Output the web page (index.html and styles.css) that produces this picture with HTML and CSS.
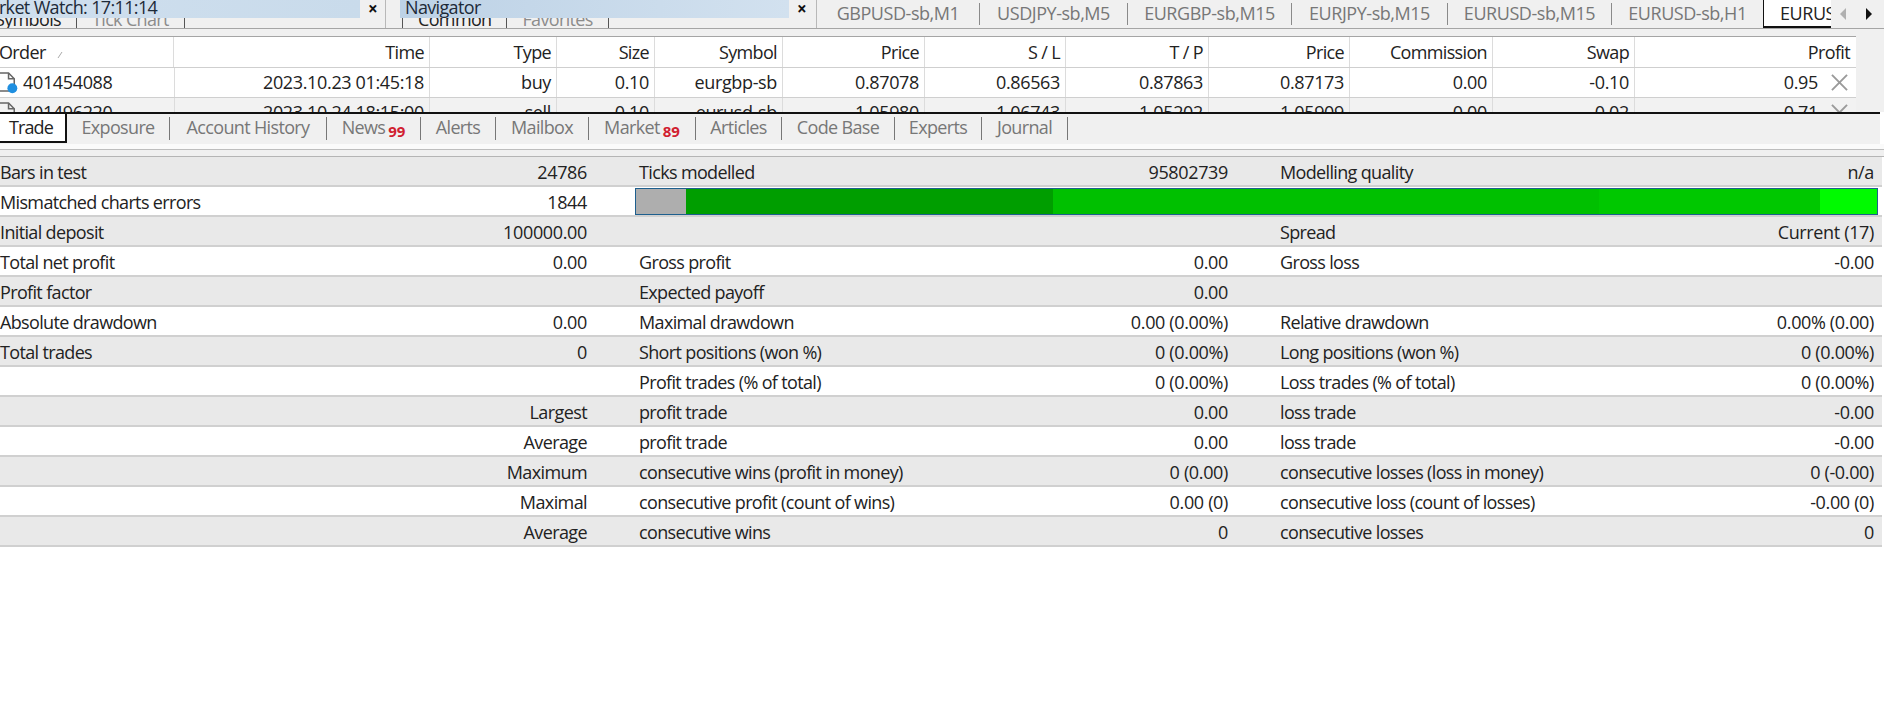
FILE: index.html
```html
<!DOCTYPE html>
<html lang="en">
<head>
<meta charset="utf-8">
<title>Strategy Tester Report</title>
<link rel="stylesheet" href="styles.css">
</head>
<body>
<header class="topbar">
  <section class="panel panel-mw">
    <div class="titlebar">
      <div class="title title-mw"><span class="title-text shift-mw">Market Watch: 17:11:14</span></div>
      <span class="close">×</span>
    </div>
    <div class="subtabs subtabs-mw">
      <span class="subtab active">Symbols</span>
      <span class="subtab">Tick Chart</span>
    </div>
  </section>
  <section class="panel panel-nav">
    <div class="titlebar">
      <div class="title title-nav"><span class="title-text">Navigator</span></div>
      <span class="close">×</span>
    </div>
    <div class="subtabs subtabs-nav">
      <span class="subtab active">Common</span>
      <span class="subtab">Favorites</span>
    </div>
  </section>
  <nav class="charttabs">
    <span class="ctab">GBPUSD-sb,M1</span>
    <span class="ctab">USDJPY-sb,M5</span>
    <span class="ctab">EURGBP-sb,M15</span>
    <span class="ctab">EURJPY-sb,M15</span>
    <span class="ctab">EURUSD-sb,M15</span>
    <span class="ctab">EURUSD-sb,H1</span>
    <span class="ctab ctab-active"><span class="ctab-clip">EURUSD-sb,H4</span></span>
    <span class="arrows">
      <svg class="arrow" viewBox="0 0 8 12"><path class="arrow-off" d="M7 0 V12 L1 6 Z"/></svg>
      <svg class="arrow" viewBox="0 0 8 12"><path class="arrow-on" d="M1 0 V12 L7 6 Z"/></svg>
    </span>
  </nav>
</header>

<main class="orders">
  <div class="orders-inner">
    <div class="orow ohead">
      <span class="c cl c-order">Order<svg class="sort" viewBox="0 0 6 8"><path d="M1 7 L5 1" /></svg></span>
      <span class="c">Time</span><span class="c">Type</span><span class="c">Size</span><span class="c">Symbol</span>
      <span class="c">Price</span><span class="c">S / L</span><span class="c">T / P</span><span class="c">Price</span>
      <span class="c">Commission</span><span class="c">Swap</span><span class="c">Profit</span>
    </div>
    <div class="orow odata">
      <span class="c cl c-id"><svg class="ficon" viewBox="0 0 20 24"><path class="fdoc" d="M-2 2 H9 L15 8 V21 H-2"/><path class="fdoc" d="M9 2 V8 H15"/><circle class="fdot" cx="13" cy="18" r="5.2"/></svg>401454088</span>
      <span class="c">2023.10.23 01:45:18</span><span class="c">buy</span><span class="c">0.10</span><span class="c">eurgbp-sb</span>
      <span class="c">0.87078</span><span class="c">0.86563</span><span class="c">0.87863</span><span class="c">0.87173</span>
      <span class="c">0.00</span><span class="c">-0.10</span>
      <span class="c c-profit">0.95<svg class="xicon" viewBox="0 0 18 18"><path d="M1 1 L17 17 M17 1 L1 17"/></svg></span>
    </div>
    <div class="orow odata oalt">
      <span class="c cl c-id"><svg class="ficon" viewBox="0 0 20 24"><path class="fdoc" d="M-2 2 H9 L15 8 V21 H-2"/><path class="fdoc" d="M9 2 V8 H15"/></svg>401496220</span>
      <span class="c">2023.10.24 18:15:00</span><span class="c">sell</span><span class="c">0.10</span><span class="c">eurusd-sb</span>
      <span class="c">1.05980</span><span class="c">1.06743</span><span class="c">1.05202</span><span class="c">1.05909</span>
      <span class="c">0.00</span><span class="c">-0.02</span>
      <span class="c c-profit">0.71<svg class="xicon" viewBox="0 0 18 18"><path d="M1 1 L17 17 M17 1 L1 17"/></svg></span>
    </div>
  </div>
</main>

<nav class="tabs">
  <span class="tab tab-active">Trade</span>
  <span class="tab">Exposure</span>
  <span class="tab">Account History</span>
  <span class="tab">News<b class="badge">99</b></span>
  <span class="tab">Alerts</span>
  <span class="tab">Mailbox</span>
  <span class="tab">Market<b class="badge">89</b></span>
  <span class="tab">Articles</span>
  <span class="tab">Code Base</span>
  <span class="tab">Experts</span>
  <span class="tab">Journal</span>
</nav>
<div class="strip"></div>

<section class="report">
  <div class="row"><span>Bars in test</span><span class="v">24786</span><span class="m">Ticks modelled</span><span class="v">95802739</span><span class="m">Modelling quality</span><span class="v">n/a</span></div>
  <div class="row"><span>Mismatched charts errors</span><span class="v">1844</span>
    <div class="quality"><i class="q q1"></i><i class="q q2"></i><i class="q q3"></i><i class="q q4"></i><i class="q q5"></i></div>
  </div>
  <div class="row"><span>Initial deposit</span><span class="v">100000.00</span><span class="m"></span><span class="v"></span><span class="m">Spread</span><span class="v">Current (17)</span></div>
  <div class="row"><span>Total net profit</span><span class="v">0.00</span><span class="m">Gross profit</span><span class="v">0.00</span><span class="m">Gross loss</span><span class="v">-0.00</span></div>
  <div class="row"><span>Profit factor</span><span class="v"></span><span class="m">Expected payoff</span><span class="v">0.00</span><span class="m"></span><span class="v"></span></div>
  <div class="row"><span>Absolute drawdown</span><span class="v">0.00</span><span class="m">Maximal drawdown</span><span class="v">0.00 (0.00%)</span><span class="m">Relative drawdown</span><span class="v">0.00% (0.00)</span></div>
  <div class="row"><span>Total trades</span><span class="v">0</span><span class="m">Short positions (won %)</span><span class="v">0 (0.00%)</span><span class="m">Long positions (won %)</span><span class="v">0 (0.00%)</span></div>
  <div class="row"><span></span><span class="v"></span><span class="m">Profit trades (% of total)</span><span class="v">0 (0.00%)</span><span class="m">Loss trades (% of total)</span><span class="v">0 (0.00%)</span></div>
  <div class="row"><span></span><span class="v w">Largest</span><span class="m">profit trade</span><span class="v">0.00</span><span class="m">loss trade</span><span class="v">-0.00</span></div>
  <div class="row"><span></span><span class="v w">Average</span><span class="m">profit trade</span><span class="v">0.00</span><span class="m">loss trade</span><span class="v">-0.00</span></div>
  <div class="row"><span></span><span class="v w">Maximum</span><span class="m">consecutive wins (profit in money)</span><span class="v">0 (0.00)</span><span class="m">consecutive losses (loss in money)</span><span class="v">0 (-0.00)</span></div>
  <div class="row"><span></span><span class="v w">Maximal</span><span class="m">consecutive profit (count of wins)</span><span class="v">0.00 (0)</span><span class="m">consecutive loss (count of losses)</span><span class="v">-0.00 (0)</span></div>
  <div class="row"><span></span><span class="v w">Average</span><span class="m">consecutive wins</span><span class="v">0</span><span class="m">consecutive losses</span><span class="v">0</span></div>
</section>
</body>
</html>
```
FILE: styles.css
```css
* { box-sizing: border-box; }
html, body { margin: 0; padding: 0; background: #fff; }
body {
  width: 1884px;
  height: 719px;
  overflow: hidden;
  font-family: "Open Sans", "Noto Sans", "Liberation Sans", sans-serif;
  font-size: 18px;
  letter-spacing: -0.65px;
  color: #222;
}

/* top strip */
.topbar {
  display: grid;
  grid-template-columns: 386px 431px 1fr;
  height: 29px;
  background: #f0f0f0;
  border-bottom: 1px solid #a5a5a5;
  overflow: hidden;
}
.panel { border-right: 1px solid #b8b8b8; overflow: hidden; }
.titlebar { display: flex; height: 18px; align-items: center; }
.panel-nav .titlebar { padding-left: 14px; }
.title {
  height: 18px;
  line-height: 14px;
  overflow: hidden;
  white-space: nowrap;
  color: #1d2a38;
}
.title-mw { width: 364px; background: linear-gradient(90deg, #cfdfee, #c9dbeb); }
.title-nav { width: 389px; background: linear-gradient(90deg, #bdd2e6, #d2e1ef); padding-left: 5px; }
.title-text { display: block; }
.shift-mw { margin-left: -26px; }
.close { width: 25px; text-align: center; font-weight: 700; font-size: 17px; line-height: 14px; color: #111; }
.subtabs { display: flex; height: 10px; overflow: hidden; color: #8c8c8c; align-items: flex-end; }
.subtabs-nav { margin-left: 16px; }
.subtab {
  display: block;
  height: 10px;
  line-height: 2px;
  padding: 0 15px;
  border-right: 1px solid #555;
  white-space: nowrap;
}
.subtab.active { color: #222; }
.subtabs-mw .subtab.active { margin-left: -20px; }
.subtabs-nav { border-left: 1px solid #555; }

.charttabs {
  display: grid;
  grid-template-columns: 163px 148px 164px 156px 164px 151px 68px 1fr;
  align-items: start;
  height: 28px;
  letter-spacing: -0.45px;
}
.ctab {
  height: 22px;
  margin-top: 3px;
  line-height: 21px;
  text-align: center;
  color: #777;
  border-right: 1px solid #8a8a8a;
  white-space: nowrap;
  overflow: hidden;
}
.ctab:nth-child(6) { border-right: 0; }
.ctab.ctab-active {
  height: 28px;
  margin-top: 0;
  line-height: 27px;
  color: #222;
  background: #fff;
  border-left: 1px solid #111;
  border-bottom: 2px solid #111;
  border-right: 0;
  text-align: left;
  padding-left: 16px;
}
.ctab-clip { display: block; width: 52px; overflow: hidden; }
.arrows { display: flex; align-items: center; gap: 18px; height: 28px; padding-left: 8px; background: #f0f0f0; }
.arrow { width: 8px; height: 12px; }
.arrow-off { fill: #b0b0b0; }
.arrow-on { fill: #111; }

/* orders table */
.orders { height: 83px; padding-top: 7px; background: #f0f0f0; overflow: hidden; }
.orders-inner { width: 1856px; border-top: 1px solid #a5a5a5; background: #fff; }
.orow {
  display: grid;
  grid-template-columns: 175px 255px 127px 98px 128px 142px 141px 143px 141px 143px 142px 221px;
  height: 30px;
  line-height: 29px;
  border-bottom: 1px solid #cfcfcf;
  white-space: nowrap;
}
.ohead { height: 31px; line-height: 31px; }
.odata { letter-spacing: -0.35px; }
.oalt { background: #f2f2f2; }
.c { padding-right: 5px; text-align: right; border-right: 1px solid #dcdcdc; overflow: hidden; }
.c:last-child { border-right: 0; }
.cl { text-align: left; padding: 0; }
.c-order { position: relative; left: -1px; }
.c-id { display: flex; align-items: center; gap: 4px; }
.sort { width: 6px; height: 8px; margin-left: 11px; }
.sort path { stroke: #aaa; stroke-width: 1; fill: none; }
.ficon { width: 19px; height: 23px; flex: none; }
.fdoc { fill: none; stroke: #666; stroke-width: 1.6; }
.fdot { fill: #1f8fe0; }
.c-profit { display: flex; justify-content: flex-end; align-items: center; gap: 13px; padding-right: 8px; }
.ohead .c:last-child { padding-right: 6px; }
.xicon { width: 17px; height: 17px; flex: none; }
.xicon path { stroke: #9a9a9a; stroke-width: 2; fill: none; }

/* bottom tabs */
.tabs {
  display: grid;
  grid-template-columns: 67px 103px 157px 94px 75px 93px 107px 86px 113px 87px 86px 1fr;
  height: 32px;
  width: 1880px;
  background: #f0f0f0;
  border-top: 2px solid #111;
  margin-top: 0;
  align-items: start;
}
.tab {
  height: 23px;
  margin-top: 3px;
  line-height: 20px;
  text-align: center;
  color: #777;
  border-right: 1px solid #777;
  white-space: nowrap;
}
.tab.tab-active {
  height: 29px;
  margin-top: 0;
  line-height: 26px;
  color: #222;
  background: #fff;
  border-right: 2px solid #111;
  border-bottom: 2px solid #111;
  letter-spacing: -0.9px;
  padding-right: 3px;
}
.badge {
  color: #d12030;
  font-size: 15px;
  font-weight: 700;
  letter-spacing: 0;
  margin-left: 3px;
  position: relative;
  top: 3px;
}
.strip {
  height: 13px;
  background: linear-gradient(#fafafa 0 5px, #bdbdbd 5px 6px, #f0f0f0 6px);
  border-bottom: 1px solid #b5b5b5;
}

/* report */
.row {
  display: grid;
  grid-template-columns: 420px 167px 313px 328px 352px 298px;
  width: 1882px;
  height: 30px;
  line-height: 30px;
  border-bottom: 2px solid #d0d0d0;
  white-space: nowrap;
}
.row:nth-child(odd) { background: #e9e9e9; }
.v { text-align: right; letter-spacing: -0.35px; }
.v.w { letter-spacing: -0.6px; }
.row .v:last-child { padding-right: 4px; }
.m { padding-left: 52px; }
.quality {
  grid-column: 3 / 7;
  display: flex;
  height: 27px;
  margin: 1px 0 0 48px;
  border: 1px solid #1e5f8e;
}
.q { display: block; height: 100%; }
.q1 { width: 50px; background: #aeaeae; }
.q2 { width: 367px; background: #009e00; }
.q3 { width: 546px; background: #00c000; }
.q4 { width: 221px; background: #00c800; }
.q5 { flex: 1; background: #00fa00; }
```
